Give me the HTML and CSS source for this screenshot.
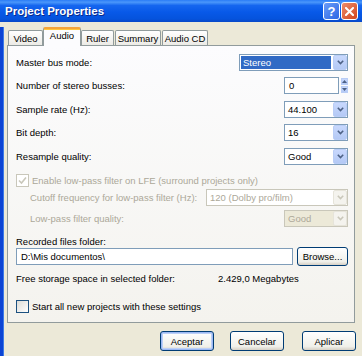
FILE: index.html
```html
<!DOCTYPE html>
<html lang="en">
<head>
    <meta charset="UTF-8">
    <title>Project Properties</title>
    <link rel="stylesheet" href="styles.css">
</head>
<body>

    <div class="titlebar">
        <span class="title">Project Properties</span>
        <div class="caption">
            <span class="cap-btn help">?</span>
            <span class="cap-btn close">
                <svg width="9" height="9" viewBox="0 0 9 9"><path d="M1 1 L8 8 M8 1 L1 8" stroke="#fff" stroke-width="2" stroke-linecap="square"/></svg>
            </span>
        </div>
    </div>

    <div class="frame">
        <div class="tabs">
            <span class="tab t-video">Video</span>
            <span class="tab active t-audio">Audio</span>
            <span class="tab t-ruler">Ruler</span>
            <span class="tab t-summary">Summary</span>
            <span class="tab t-cd">Audio CD</span>
        </div>

        <div class="panel">
            <div class="row r1">
                <label>Master bus mode:</label>
                <div class="combo c-wide">
                    <span class="value selected">Stereo</span>
                    <span class="arrow"><svg width="7" height="5" viewBox="0 0 7 5"><path d="M0.8 0.8 L3.5 3.5 L6.2 0.8" fill="none" stroke="#4d6185" stroke-width="1.6"/></svg></span>
                </div>
            </div>
            <div class="row r2">
                <label>Number of stereo busses:</label>
                <div class="spin">
                    <span class="textbox t-spin">0</span>
                    <span class="spin-btns">
                        <span class="spin-btn"><svg width="5" height="3" viewBox="0 0 5 3"><path d="M0 3 L2.5 0 L5 3 Z" fill="#4d6185"/></svg></span>
                        <span class="spin-btn"><svg width="5" height="3" viewBox="0 0 5 3"><path d="M0 0 L2.5 3 L5 0 Z" fill="#4d6185"/></svg></span>
                    </span>
                </div>
            </div>
            <div class="row r3">
                <label>Sample rate (Hz):</label>
                <div class="combo c-small">
                    <span class="value">44.100</span>
                    <span class="arrow"><svg width="7" height="5" viewBox="0 0 7 5"><path d="M0.8 0.8 L3.5 3.5 L6.2 0.8" fill="none" stroke="#4d6185" stroke-width="1.6"/></svg></span>
                </div>
            </div>
            <div class="row r4">
                <label>Bit depth:</label>
                <div class="combo c-small">
                    <span class="value">16</span>
                    <span class="arrow"><svg width="7" height="5" viewBox="0 0 7 5"><path d="M0.8 0.8 L3.5 3.5 L6.2 0.8" fill="none" stroke="#4d6185" stroke-width="1.6"/></svg></span>
                </div>
            </div>
            <div class="row r5">
                <label>Resample quality:</label>
                <div class="combo c-small">
                    <span class="value">Good</span>
                    <span class="arrow"><svg width="7" height="5" viewBox="0 0 7 5"><path d="M0.8 0.8 L3.5 3.5 L6.2 0.8" fill="none" stroke="#4d6185" stroke-width="1.6"/></svg></span>
                </div>
            </div>

            <div class="check-row r6 disabled">
                <span class="checkbox checked-off">
                    <svg width="9" height="9" viewBox="0 0 9 9"><path d="M1 4.5 L3.5 7 L8 1.5" fill="none" stroke="#c9c7ba" stroke-width="1.6"/></svg>
                </span>
                <span>Enable low-pass filter on LFE (surround projects only)</span>
            </div>
            <div class="row r7 indent disabled">
                <label>Cutoff frequency for low-pass filter (Hz):</label>
                <div class="combo c-cutoff off">
                    <span class="value">120 (Dolby pro/film)</span>
                    <span class="arrow"><svg width="7" height="5" viewBox="0 0 7 5"><path d="M0.8 0.8 L3.5 3.5 L6.2 0.8" fill="none" stroke="#c9c7ba" stroke-width="1.6"/></svg></span>
                </div>
            </div>
            <div class="row r8 indent disabled">
                <label>Low-pass filter quality:</label>
                <div class="combo c-small off beige">
                    <span class="value">Good</span>
                    <span class="arrow"><svg width="7" height="5" viewBox="0 0 7 5"><path d="M0.8 0.8 L3.5 3.5 L6.2 0.8" fill="none" stroke="#c9c7ba" stroke-width="1.6"/></svg></span>
                </div>
            </div>

            <div class="line r9">Recorded files folder:</div>
            <div class="row r10">
                <span class="textbox t-folder">D:\Mis documentos\</span>
                <button class="btn browse">Browse...</button>
            </div>
            <div class="line r11">
                <span class="free-label">Free storage space in selected folder:</span>
                <span>2.429,0 Megabytes</span>
            </div>

            <div class="check-row r12">
                <span class="checkbox"></span>
                <span>Start all new projects with these settings</span>
            </div>
        </div>

        <div class="buttons">
            <button class="btn default b-ok">Aceptar</button>
            <button class="btn b-cancel">Cancelar</button>
            <button class="btn b-apply">Aplicar</button>
        </div>
    </div>

</body>
</html>
```

FILE: styles.css
```css
body {
    margin: 0;
    width: 362px;
    height: 356px;
    overflow: hidden;
    font-family: 'Liberation Sans', Tahoma, sans-serif;
    font-size: 9.5px;
    color: #000000;
    background-color: #ece9d8;
}

/* title bar */

.titlebar {
    height: 22px;
    display: flex;
    align-items: center;
    justify-content: space-between;
    padding: 0 4px 0 5px;
    background: linear-gradient(#2a7cf6 0%, #4a97fb 10%, #1566ef 25%, #0859e8 55%, #0553dd 85%, #0a49c8 100%);
}

.title {
    color: #ffffff;
    font-weight: bold;
    font-size: 11.5px;
    text-shadow: 1px 1px 0 #0b2a8a;
}

.caption {
    display: flex;
    gap: 1px;
}

.cap-btn {
    width: 17px;
    height: 18px;
    box-sizing: border-box;
    border: 1px solid #ffffff;
    border-radius: 3px;
    display: flex;
    align-items: center;
    justify-content: center;
    color: #ffffff;
    font-weight: bold;
    font-size: 13px;
}

.help {
    background: linear-gradient(135deg, #6a9cf8, #2c66e4);
}

.close {
    background: linear-gradient(135deg, #ec8c6c, #d2451d);
}

/* window body */

.frame {
    height: 334px;
    border-left: 3px solid #0c44d4;
    box-shadow: inset 1px 0 0 #3c7ae8;
    padding-left: 4px;
}

.tabs {
    display: flex;
    align-items: flex-end;
    height: 18px;
    margin-top: 5px;
    padding-left: 1px;
    position: relative;
    z-index: 1;
}

.tab {
    height: 15px;
    box-sizing: border-box;
    border: 1px solid #919b9c;
    border-bottom: none;
    border-radius: 2px 2px 0 0;
    background: linear-gradient(#ffffff, #ecebe6);
    display: flex;
    align-items: center;
    justify-content: center;
    margin-right: 1px;
}

.tab.active {
    height: 19px;
    margin: 0 0 -1px -1px;
    background: #fcfcfe;
    border-top: 2px solid #f5a43a;
    box-shadow: inset 0 1px 0 #ffc83c;
    padding-bottom: 4px;
}

.t-video { width: 35px; }
.t-audio { width: 38px; }
.t-ruler { width: 33px; }
.t-summary { width: 46px; }
.t-cd { width: 46px; }

.panel {
    width: 348px;
    height: 278px;
    box-sizing: border-box;
    border: 1px solid #919b9c;
    padding: 8px 6px 0 8px;
    background: linear-gradient(#fcfcfe, #f4f3ee);
}

/* rows */

.row {
    display: flex;
    align-items: center;
    justify-content: space-between;
    height: 17px;
}

.r2, .r4 { margin-top: 6px; }
.r3, .r5 { margin-top: 7px; }
.r7 { margin-top: 2px; }
.r8 { margin-top: 4px; }
.r10 { height: 19px; }

.indent {
    padding-left: 14px;
}

.disabled {
    color: #aca899;
}

.line {
    height: 12px;
    display: flex;
    align-items: center;
}

.r9 { margin-top: 8px; }
.r11 { margin-top: 6px; }

.free-label {
    width: 202px;
}

.check-row {
    display: flex;
    align-items: center;
    gap: 3px;
    height: 13px;
}

.r6 { margin-top: 9px; }
.r12 { margin-top: 16px; }

.checkbox {
    width: 13px;
    height: 13px;
    box-sizing: border-box;
    border: 1px solid #1c5180;
    background: linear-gradient(135deg, #dcdcd7, #ffffff);
    display: flex;
    align-items: center;
    justify-content: center;
}

.checked-off {
    border-color: #c9c7ba;
    background: #ffffff;
}

/* combos and text boxes */

.combo {
    height: 17px;
    box-sizing: border-box;
    border: 1px solid #7f9db9;
    background: #ffffff;
    display: flex;
    align-items: center;
    padding: 1px;
}

.combo .value {
    flex: 1;
    height: 13px;
    display: flex;
    align-items: center;
    padding-left: 2px;
}

.value.selected {
    background-color: #316ac5;
    color: #ffffff;
    margin-right: 2px;
}

.arrow {
    width: 14px;
    height: 15px;
    margin: -1px -1px -1px 0;
    box-sizing: border-box;
    border: 1px solid #b9cdf6;
    border-radius: 2px;
    background: linear-gradient(#c8d8fd, #b4c9f5);
    display: flex;
    align-items: center;
    justify-content: center;
}

.c-wide { width: 109px; }
.c-small { width: 64px; }
.c-cutoff { width: 142px; }

.combo.off {
    border-color: #c9c7ba;
}

.combo.off .arrow {
    border-color: #e6e4da;
    background: #f4f3ee;
}

.combo.beige {
    background: #ece9d8;
}

.textbox {
    height: 17px;
    box-sizing: border-box;
    border: 1px solid #7f9db9;
    background: #ffffff;
    display: flex;
    align-items: center;
    padding-left: 4px;
}

.spin {
    display: flex;
    align-items: center;
    gap: 2px;
}

.t-spin { width: 55px; }

.spin-btns {
    display: flex;
    flex-direction: column;
    gap: 1px;
}

.spin-btn {
    width: 7px;
    height: 7px;
    box-sizing: border-box;
    background: linear-gradient(#c8d8fd, #b4c9f5);
    border: 1px solid #b9cdf6;
    display: flex;
    align-items: center;
    justify-content: center;
}

.t-folder { width: 277px; }

/* buttons */

.btn {
    font-family: inherit;
    font-size: 9.5px;
    height: 19px;
    box-sizing: border-box;
    border: 1px solid #003c74;
    border-radius: 3px;
    background: linear-gradient(#ffffff, #f0f0ea 80%, #d6d0c5);
    color: #000000;
    padding: 0;
}

.browse { width: 51px; }

.buttons {
    display: flex;
    justify-content: flex-end;
    margin-top: 8px;
    padding-right: 6px;
}

.buttons .btn {
    width: 54px;
    height: 20px;
}

.b-cancel { margin-left: 16px; }
.b-apply { margin-left: 18px; }

.default {
    box-shadow: inset 0 0 0 1px #9cb8f4, inset 0 0 0 2px #bcd0f6;
}
```
